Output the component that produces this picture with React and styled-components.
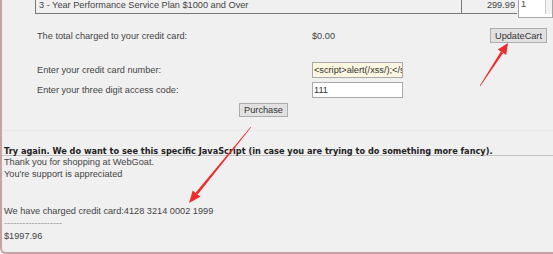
import React from 'react'
import styled, { createGlobalStyle } from 'styled-components'

const GlobalStyle = createGlobalStyle`
  html, body {
    margin: 0;
    padding: 0;
    background: #f0f0f0;
  }
  body {
    font-family: "Liberation Sans", Arial, sans-serif;
    font-size: 9.2px;
    color: #444;
  }
`

function Arrow({ from, to, head = 12, half = 5 }) {
  const dx = to[0] - from[0]
  const dy = to[1] - from[1]
  const len = Math.hypot(dx, dy)
  const ux = dx / len
  const uy = dy / len
  const px = -uy
  const py = ux
  const bx = to[0] - ux * head
  const by = to[1] - uy * head
  const shaft = [
    [from[0] + px * 0.3, from[1] + py * 0.3],
    [bx + px * 1.4, by + py * 1.4],
    [bx - px * 1.4, by - py * 1.4],
    [from[0] - px * 0.3, from[1] - py * 0.3],
  ]
  const tip = [
    to,
    [bx + px * half, by + py * half],
    [bx - px * half, by - py * half],
  ]
  const pts = (a) => a.map((p) => p.join(',')).join(' ')
  return (
    <g fill="#ec2d2d">
      <polygon points={pts(shaft)} />
      <polygon points={pts(tip)} />
    </g>
  )
}

export default function App() {
  return (
    <>
      <GlobalStyle />
      <Panel>
        <CartRow>
          <DescCell>3 - Year Performance Service Plan $1000 and Over</DescCell>
          <PriceCell>299.99</PriceCell>
          <QtyCell>
            <QtyInput>
              <span>1</span>
              <Spinner />
            </QtyInput>
          </QtyCell>
        </CartRow>

        <Form>
          <FormRow $top={14}>
            <Label>The total charged to your credit card:</Label>
            <Value>$0.00</Value>
            <Button $w={57} $h={15}>UpdateCart</Button>
          </FormRow>
          <FormRow $top={19}>
            <Label>Enter your credit card number:</Label>
            <Field $bg="#fdf6e1">&lt;script&gt;alert(/xss/);&lt;/sc</Field>
          </FormRow>
          <FormRow $top={4}>
            <Label>Enter your three digit access code:</Label>
            <Field>111</Field>
          </FormRow>
          <ButtonRow>
            <Button $w={49} $h={14}>Purchase</Button>
          </ButtonRow>
        </Form>

        <Result>
          <Notice>
            Try again. We do want to see this specific JavaScript (in case you are trying to do something more fancy).
          </Notice>
          <Line>Thank you for shopping at WebGoat.</Line>
          <Line>You're support is appreciated</Line>
          <Line />
          <Line />
          <Line>We have charged credit card:4128 3214 0002 1999</Line>
          <Dashes>-------------------</Dashes>
          <Line>$1997.96</Line>
        </Result>

        <Overlay viewBox="0 0 553 254">
          <Arrow from={[480, 86]} to={[508, 43]} head={11} />
          <Arrow from={[251, 127]} to={[189, 203]} />
        </Overlay>
      </Panel>
    </>
  )
}

const Panel = styled.div`
  position: relative;
  width: 553px;
  height: 254px;
  box-sizing: border-box;
  border-left: 2px solid #c9a3a3;
  border-bottom: 2px solid #c9a3a3;
  border-bottom-left-radius: 6px;
  overflow: hidden;
`

const CartRow = styled.div`
  display: flex;
  align-items: flex-start;
  margin-top: -1px;
  margin-left: 33px;
  height: 15px;
`

const DescCell = styled.div`
  width: 427px;
  height: 15px;
  box-sizing: border-box;
  border-left: 1px solid #777;
  border-right: 1px solid #777;
  border-bottom: 1px solid #777;
  padding-left: 3px;
  line-height: 13px;
  color: #444;
`

const PriceCell = styled.div`
  width: 55px;
  height: 15px;
  box-sizing: border-box;
  border-bottom: 1px solid #777;
  text-align: right;
  padding-right: 2px;
  line-height: 13px;
`

const QtyCell = styled.div`
  flex: 1;
  height: 15px;
  padding-left: 1px;
`

const QtyInput = styled.div`
  display: flex;
  justify-content: space-between;
  align-items: flex-start;
  margin-top: -2px;
  height: 21px;
  box-sizing: border-box;
  border: 1px solid #a6a6a6;
  background: #fff;
  padding-left: 2px;
  line-height: 13px;
`

const Spinner = styled.div`
  width: 6px;
  height: 16px;
  border-left: 1px solid #ccc;
  background: #f2f2f2;
`

const Form = styled.div`
  padding-left: 35px;
`

const FormRow = styled.div`
  display: grid;
  grid-template-columns: 275px 178px 57px;
  align-items: center;
  margin-top: ${(p) => p.$top}px;
`

const Label = styled.div`
  line-height: 12px;
`

const Value = styled.div`
  line-height: 12px;
`

const Button = styled.div`
  display: flex;
  align-items: center;
  justify-content: center;
  width: ${(p) => p.$w}px;
  height: ${(p) => p.$h}px;
  box-sizing: border-box;
  background: #e1e1e1;
  border: 1px solid #adadad;
  color: #333;
`

const Field = styled.div`
  width: 91px;
  height: 16px;
  box-sizing: border-box;
  border: 1px solid #a9a9a9;
  background: ${(p) => p.$bg || '#fff'};
  padding: 0 1px;
  line-height: 14px;
  white-space: nowrap;
  overflow: hidden;
  color: #333;
`

const ButtonRow = styled.div`
  display: flex;
  margin-top: 5px;
  padding-left: 202px;
`

const Result = styled.div`
  margin-top: 13px;
  border-top: 1px solid #e8e8e8;
  padding-top: 16px;
`

const Notice = styled.div`
  font-family: "DejaVu Sans", Verdana, sans-serif;
  font-weight: bold;
  font-size: 8.2px;
  color: #222;
  line-height: 8px;
  padding-left: 2px;
  border-bottom: 1px solid #c4c4c4;
  white-space: nowrap;
`

const Line = styled.div`
  padding-left: 2px;
  line-height: 12.3px;
  min-height: 12.3px;
`

const Dashes = styled.div`
  padding-left: 2px;
  line-height: 12.3px;
  color: #999;
`

const Overlay = styled.svg`
  position: absolute;
  left: -2px;
  top: 0;
  width: 553px;
  height: 254px;
  pointer-events: none;
`
